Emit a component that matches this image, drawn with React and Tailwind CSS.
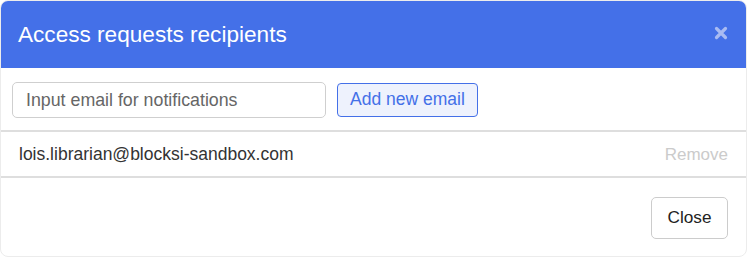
export default function App() {
  const font = { fontFamily: '"Liberation Sans", Arial, Helvetica, sans-serif' };
  return (
    <div className="w-[748px] h-[258px] bg-white" style={font}>
      <div className="w-[747px] h-[257px] rounded-[8px] border border-[#ececec] overflow-hidden flex flex-col bg-white">
        <div className="h-[68px] shrink-0 bg-[#4470e8] flex items-center justify-between pl-[18px] pr-[19px] -mx-px -mt-px">
          <span className="text-white text-[22.6px] leading-none mt-[3px]">Access requests recipients</span>
          <svg width="14" height="14" viewBox="0 0 14 14" className="-mt-[3px]">
            <path d="M2.5 2.5 L11.5 11.5 M11.5 2.5 L2.5 11.5" stroke="#a9bbf2" strokeWidth="3.2" strokeLinecap="round" />
          </svg>
        </div>
        <div className="flex items-center gap-[11px] pl-[11px] pt-[14px] pb-[12px] border-b-2 border-[#dedede]">
          <div className="w-[314px] h-[36px] rounded-[5px] border border-[#cfcfcf] flex items-center pl-[13px] text-[17.8px] text-[#666]">
            Input email for notifications
          </div>
          <button className="h-[34px] px-[12px] rounded-[4px] border border-[#4470e8] bg-[#eef2fd] text-[#4470e8] text-[17.5px] leading-none">
            Add new email
          </button>
        </div>
        <div className="h-[46px] flex items-center justify-between pl-[18px] pr-[18px] border-b-2 border-[#dedede]">
          <span className="text-[17.5px] text-[#333] mt-[1px]">lois.librarian@blocksi-sandbox.com</span>
          <span className="text-[17px] text-[#cbcbcb] mt-[1px]">Remove</span>
        </div>
        <div className="flex-1 flex justify-end items-start pt-[19px] pr-[18px]">
          <button className="h-[42px] w-[77px] rounded-[5px] border border-[#cccccc] bg-white text-[17.2px] text-[#222] leading-none">
            Close
          </button>
        </div>
      </div>
    </div>
  );
}
